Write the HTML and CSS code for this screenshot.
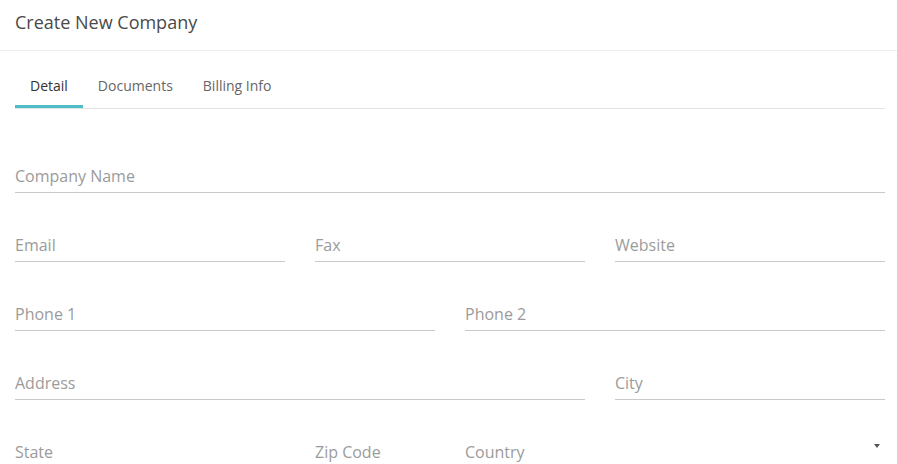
FILE: index.html
```html
<!DOCTYPE html>
<html lang="en">
<head>
    <meta charset="UTF-8">
    <meta name="viewport" content="width=device-width, initial-scale=1.0">
    <title>Create New Company</title>
    <link rel="stylesheet" href="styles.css">
</head>
<body>
    <div class="header">Create New Company</div>

    <div class="content">
        <div class="tabs">
            <div class="tab active">Detail</div>
            <div class="tab">Documents</div>
            <div class="tab">Billing Info</div>
        </div>

        <div class="form">
            <div class="row">
                <div class="field col-12">Company Name</div>
            </div>
            <div class="row">
                <div class="field col-4">Email</div>
                <div class="field col-4">Fax</div>
                <div class="field col-4">Website</div>
            </div>
            <div class="row">
                <div class="field col-6">Phone 1</div>
                <div class="field col-6">Phone 2</div>
            </div>
            <div class="row">
                <div class="field col-8">Address</div>
                <div class="field col-4">City</div>
            </div>
            <div class="row">
                <div class="field col-4">State</div>
                <div class="field col-2">Zip Code</div>
                <div class="field select col-6">Country <span class="caret"></span></div>
            </div>
        </div>
    </div>
</body>
</html>
```

FILE: styles.css
```css
body {
    font-family: "Open Sans", Arial, sans-serif;
    margin: 0;
    background: #fff;
    overflow: hidden;
}
.header {
    font-size: 18px;
    line-height: 24px;
    color: #4a4a4a;
    padding: 10px 15px 16px;
    border-bottom: 1px solid #eee;
}
.content {
    padding: 0 12px 0 15px;
}
.tabs {
    display: flex;
    margin-top: 15px;
    border-bottom: 1px solid #e3e3e3;
}
.tab {
    font-size: 14px;
    line-height: 20px;
    color: #666;
    padding: 10px 15px 9px;
    border-bottom: 3px solid transparent;
}
.tab.active {
    color: #333;
    border-bottom-color: #4dbdc6;
}
.form {
    margin-top: 55px;
    display: flex;
    flex-direction: column;
    gap: 40px;
}
.row {
    display: grid;
    grid-template-columns: repeat(12, 1fr);
    column-gap: 30px;
}
.col-2 { grid-column: span 2; }
.col-4 { grid-column: span 4; }
.col-6 { grid-column: span 6; }
.col-8 { grid-column: span 8; }
.col-12 { grid-column: span 12; }
.field {
    font-size: 16px;
    line-height: 24px;
    color: #9b9b9b;
    padding-bottom: 4px;
    border-bottom: 1px solid #c9c9c9;
}
.select {
    position: relative;
}
.caret {
    position: absolute;
    right: 5px;
    top: 4px;
    border-left: 3.5px solid transparent;
    border-right: 3.5px solid transparent;
    border-top: 4px solid #555;
}
```
